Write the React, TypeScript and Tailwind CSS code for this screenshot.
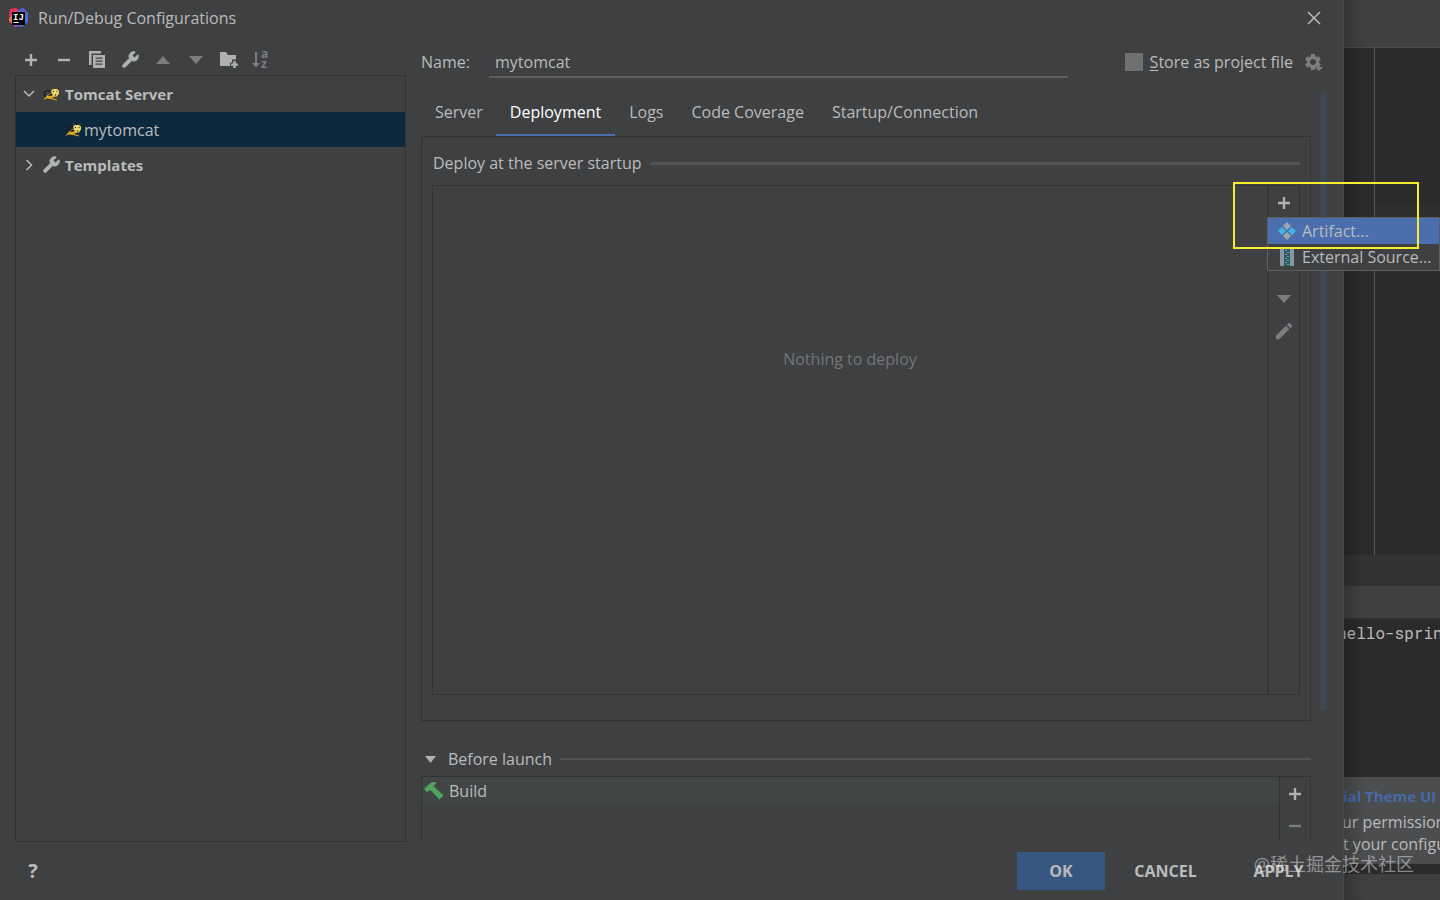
import { useState } from "react";
import type { ReactNode } from "react";
import { Wrench } from "lucide-react";
import { MdEdit, MdSettings } from "react-icons/md";

const TABS = [
  "Server",
  "Deployment",
  "Logs",
  "Code Coverage",
  "Startup/Connection",
];

const PlusIcon = () => (
  <svg width="14" height="14" viewBox="0 0 14 14" fill="currentColor">
    <path d="M5.800 1h2.400v4.800H13v2.400H8.200V13H5.800V8.200H1V5.800h4.800z" />
  </svg>
);

const MinusIcon = () => (
  <svg width="14" height="14" viewBox="0 0 14 14" fill="currentColor">
    <path d="M1 5.800h12v2.400H1z" />
  </svg>
);

const CopyIcon = () => (
  <svg width="16" height="18" viewBox="0 0 16 18">
    <path d="M0 0h12v2.500H2.500V14H0z" fill="currentColor" />
    <path
      fillRule="evenodd"
      fill="currentColor"
      d="M4 4h12v13H4zM6.500 6.500v1.200h7V6.500zM6.500 9.500v1.200h7V9.500zM6.500 12.500v1.200h7v-1.200z"
    />
  </svg>
);

const TriangleIcon = ({ up = false }: { up?: boolean }) => (
  <svg width="14" height="8" viewBox="0 0 14 8" fill="currentColor">
    <path d={up ? "M7 0l7 8H0z" : "M0 0h14L7 8z"} />
  </svg>
);

const WrenchIcon = () => (
  <Wrench size={19} strokeWidth={1} fill="currentColor" />
);

const FolderPlusIcon = () => (
  <svg width="19" height="17" viewBox="0 0 19 17" fill="currentColor">
    <path d="M0 1h6l2 3h8v4.500h-4v3h-2V15H0z" />
    <path d="M13.300 10h2.400v2.400H18v2.300h-2.300V17h-2.400v-2.300H11v-2.300h2.300z" />
  </svg>
);

const SortIcon = () => (
  <svg width="20" height="22" viewBox="0 0 20 22" fill="currentColor">
    <path d="M3 3h2v11h3l-4 4.500L0 14h3z" />
    <text x="9" y="9" fontSize="12" fontWeight="700" fontFamily="Open Sans">
      a
    </text>
    <text x="9" y="19" fontSize="12" fontWeight="700" fontFamily="Open Sans">
      z
    </text>
  </svg>
);

const ChevronIcon = ({ open = false }: { open?: boolean }) => (
  <svg
    width="12"
    height="12"
    viewBox="0 0 12 12"
    fill="none"
    stroke="currentColor"
    strokeWidth="1.500"
  >
    <path d={open ? "M1 3l5 5 5-5" : "M3.500 1l5 5-5 5"} />
  </svg>
);

const TomcatIcon = () => (
  <svg width="17" height="14" viewBox="0 0 17 14">
    <path
      d="M3 9.500C0 8 1 4 4.500 3.500L8 4.500"
      fill="none"
      stroke="#1d1d1b"
      strokeWidth="1.200"
    />
    <path d="M3.500 9l5-3.500 3.500 4-3 1.500 5 1.500v1L8 12l-4-.5L0 13l3-3z" fill="#dba91f" />
    <path d="M5 8.500l3.500-2.500 1.500 2-3 1z" fill="#1d1d1b" />
    <path d="M8 .5l2 1.500h4l2-1.500v6L14 9.500h-3L8.500 6z" fill="#eed56c" />
    <path d="M8 .5l2 1.500-1.500 1.500zM16 .5L14 2l2 1.500zM11.500 7.500h2l-1 1.500z" fill="#2b2410" />
    <path d="M10 4h1v1h-1zM13.500 4h1v1h-1z" fill="#1d1d1b" />
  </svg>
);

const HammerIcon = () => (
  <svg width="20" height="18" viewBox="0 0 20 18" fill="#4fa35c">
    <path d="M0 7l6-5.500C8 0 10.500-.5 12.500 1L9.500 4l10 9.500-4 4L6.500 8 3 10z" />
  </svg>
);

const ArtifactIcon = () => (
  <svg width="18" height="18" viewBox="0 0 18 18">
    <path d="M9 0l4 4-4 4-4-4zM9 10l4 4-4 4-4-4z" fill="#9aa7b0" />
    <path d="M4 5l4 4-4 4-4-4zM14 5l4 4-4 4-4-4z" fill="#40b6e0" />
  </svg>
);

const ArchiveIcon = () => (
  <svg width="14" height="17" viewBox="0 0 14 17">
    <path d="M0 0h14v17H0z" fill="#8b979f" />
    <path d="M4 0h6v17H4z" fill="#33565f" />
    <path
      d="M5 1h2v1H5zM7 3h2v1H7zM5 5h2v1H5zM7 7h2v1H7zM5 9h2v1H5zM7 11h2v1H7zM5 13h2v1H5zM7 15h2v1H7z"
      fill="#40b6c8"
    />
  </svg>
);

const IdeaLogo = () => (
  <svg width="21" height="20" viewBox="0 0 21 20">
    <path d="M2 1l6-1 4 3-5 9-6-4z" fill="#e8325c" />
    <path d="M1 10l5-4 3 9-5 1-3-3z" fill="#f0733c" />
    <path d="M10 2l5-2 5 5v9l-6 5-5-1z" fill="#3d6fe0" />
    <path d="M11 3l4-3 5 5-2 4z" fill="#5c5fc8" />
    <path d="M3 15l5-2 6 4-7 2z" fill="#b04ad0" />
    <path d="M4 4h13v13H4z" fill="#000" />
    <path d="M5.500 14h5v1h-5z" fill="#fff" />
    <text
      x="5"
      y="12"
      fontSize="9"
      fontWeight="700"
      fontFamily="Liberation Mono"
      fill="#fff"
    >
      IJ
    </text>
  </svg>
);

type IconButtonProps = {
  label: string;
  dim?: boolean;
  children: ReactNode;
};

const IconButton = ({ label, dim, children }: IconButtonProps) => (
  <button
    type="button"
    aria-label={label}
    className={`flex h-8 w-8 items-center justify-center ${dim ? "text-[#7b7d7f]" : "text-[#afb1b3]"}`}
  >
    {children}
  </button>
);

const ConfigTree = () => (
  <aside className="flex w-[391px] shrink-0 flex-col">
    <div className="flex h-[31px] items-center gap-px">
      <IconButton label="Add"><PlusIcon /></IconButton>
      <IconButton label="Remove"><MinusIcon /></IconButton>
      <IconButton label="Copy"><CopyIcon /></IconButton>
      <IconButton label="Edit templates"><WrenchIcon /></IconButton>
      <IconButton label="Move up" dim><TriangleIcon up /></IconButton>
      <IconButton label="Move down" dim><TriangleIcon /></IconButton>
      <IconButton label="New folder"><FolderPlusIcon /></IconButton>
      <IconButton label="Sort" dim><SortIcon /></IconButton>
    </div>
    <ul className="flex-1 border border-[#313335]">
      <li>
        <div className="flex h-9 items-center pl-[7px] text-[15px] font-bold">
          <ChevronIcon open />
          <span className="mr-1 ml-2"><TomcatIcon /></span>
          <span className="pl-px">Tomcat Server</span>
        </div>
        <div className="flex h-[35px] items-center gap-0.5 bg-[#0d293e] pl-[49px]">
          <TomcatIcon />
          mytomcat
        </div>
      </li>
      <li className="flex h-[35px] items-center pl-[7px] text-[15px] font-bold">
        <ChevronIcon />
        <span className="mr-1 ml-[7px] text-[#afb1b3]"><WrenchIcon /></span>
        Templates
      </li>
    </ul>
  </aside>
);

const AddMenu = () => (
  <div
    role="menu"
    className="absolute top-[31px] -left-0.5 z-10 w-[173px] border border-[#5e6060] bg-[#3e4042]"
  >
    <button
      type="button"
      role="menuitem"
      className="flex h-[26px] w-full items-center gap-1.5 bg-[#4b6eaf] pl-2.5 whitespace-nowrap"
    >
      <ArtifactIcon />
      Artifact...
    </button>
    <button
      type="button"
      role="menuitem"
      className="flex h-[26px] w-full items-center gap-2 pl-3 whitespace-nowrap"
    >
      <ArchiveIcon />
      External Source...
    </button>
  </div>
);

const DeploymentPanel = () => (
  <section className="flex flex-1 flex-col border border-[#313335] px-2.5 pt-[15px] pb-[25px]">
    <div className="flex items-center gap-2 pl-px">
      <h2>Deploy at the server startup</h2>
      <div className="h-[3px] flex-1 bg-[#515355]" />
    </div>
    <div className="mt-[11px] flex flex-1 border border-[#313335]">
      <div className="flex-1 pt-[162px] text-center text-[#747678]">
        Nothing to deploy
      </div>
      <div className="relative border-l-2 border-[#353739] pt-px">
        <div className="flex w-[30px] flex-col items-center">
          <IconButton label="Add deployment"><PlusIcon /></IconButton>
          <IconButton label="Remove deployment" dim><MinusIcon /></IconButton>
          <IconButton label="Move deployment up" dim><TriangleIcon up /></IconButton>
          <IconButton label="Move deployment down" dim><TriangleIcon /></IconButton>
          <IconButton label="Edit deployment" dim><MdEdit size={22} /></IconButton>
        </div>
        <AddMenu />
        <div className="pointer-events-none absolute -top-1 -left-9 z-20 h-[67px] w-[186px] border-2 border-[#f5ee2f]" />
      </div>
    </div>
  </section>
);

const BeforeLaunch = () => (
  <section className="mt-[27px]">
    <div className="flex h-[22px] items-center">
      <button type="button" className="flex items-center gap-3 pl-1">
        <svg width="11" height="7" viewBox="0 0 11 7" fill="#afb1b3">
          <path d="M0 0h11L5.500 7z" />
        </svg>
        Before launch
      </button>
      <div className="ml-2 h-0.5 flex-1 bg-[#515355]" />
    </div>
    <div className="mt-1.5 flex h-[66px] border border-b-0 border-[#313335]">
      <div className="flex-1">
        <div className="flex h-7 items-center gap-[5px] bg-[#3f4645] pl-0.5">
          <HammerIcon />
          Build
        </div>
      </div>
      <div className="flex w-[31px] flex-col items-center border-l border-[#313335] pt-px">
        <IconButton label="Add task"><PlusIcon /></IconButton>
        <IconButton label="Remove task" dim><MinusIcon /></IconButton>
      </div>
    </div>
  </section>
);

const ConfigEditor = () => {
  const [activeTab, setActiveTab] = useState("Deployment");
  const [name, setName] = useState("mytomcat");

  return (
    <main className="flex min-w-0 flex-1 flex-col">
      <div className="flex h-9 items-center pr-5">
        <label htmlFor="name" className="w-[68px]">Name:</label>
        <input
          id="name"
          value={name}
          onChange={(e) => setName(e.target.value)}
          className="h-8 min-w-0 flex-1 border-b-2 border-[#5b5d5f] px-1.5 pt-0.5 outline-none"
        />
        <input
          id="store"
          type="checkbox"
          className="ml-[57px] size-[18px] appearance-none bg-[#6e7072]"
        />
        <label htmlFor="store" className="ml-[7px]">
          <span className="underline underline-offset-2">S</span>tore as project file
        </label>
        <button
          type="button"
          aria-label="Storage options"
          className="relative ml-2.5 text-[#7b7d7f]"
        >
          <MdSettings size={20} />
          <svg
            className="absolute right-0 bottom-0"
            width="8"
            height="5"
            viewBox="0 0 8 5"
            fill="currentColor"
          >
            <path d="M0 0h8L4 4z" />
          </svg>
        </button>
      </div>
      <div className="flex flex-1 pt-2.5 pr-4">
        <div className="flex min-w-0 flex-1 flex-col">
          <div role="tablist" className="flex">
            {TABS.map((tab) => (
              <button
                key={tab}
                type="button"
                role="tab"
                aria-selected={tab === activeTab}
                onClick={() => setActiveTab(tab)}
                className={`h-[46px] border-b-2 px-3.5 first:pr-[13px] ${
                  tab === activeTab
                    ? "border-[#4b6eaf] text-white"
                    : "border-transparent"
                }`}
              >
                {tab}
              </button>
            ))}
          </div>
          <DeploymentPanel />
          <BeforeLaunch />
        </div>
        <div className="mt-0.5 mb-[131px] ml-[9px] w-[7px] rounded-full bg-[#3d4852]" />
      </div>
    </main>
  );
};

const RunConfigDialog = () => (
  <div className="relative z-10 flex min-w-0 flex-1 flex-col border-r border-[#484a4c] bg-[#3e4042]">
    <header className="flex h-11 items-start justify-between pt-[7px] pr-[22px] pl-2">
      <h1 className="flex items-center gap-[9px]">
        <IdeaLogo />
        Run/Debug Configurations
      </h1>
      <button type="button" aria-label="Close" className="pt-1">
        <svg
          width="14"
          height="14"
          viewBox="0 0 14 14"
          stroke="currentColor"
          strokeWidth="1.500"
        >
          <path d="M1 1l12 12M13 1L1 13" />
        </svg>
      </button>
    </header>
    <div className="flex flex-1 gap-[15px] pl-[15px]">
      <ConfigTree />
      <ConfigEditor />
    </div>
    <footer className="flex h-[58px] items-center justify-between pr-3 pl-6 font-bold">
      <button type="button" aria-label="Help" className="w-[18px] text-xl">
        ?
      </button>
      <div className="flex">
        <button type="button" className="h-[38px] w-[88px] bg-[#365880]">
          OK
        </button>
        <button type="button" className="h-[38px] w-[121px]">
          CANCEL
        </button>
        <button type="button" className="h-[38px] w-[105px]">
          APPLY
        </button>
      </div>
    </footer>
  </div>
);

const IdeBackdrop = () => (
  <div className="relative flex w-24 shrink-0 flex-col overflow-hidden bg-[#2b2b2b] whitespace-nowrap">
    <div className="h-12 border-b border-[#4a4c4e] bg-[#3e4042]" />
    <div className="flex flex-1">
      <div className="w-[31px] border-r border-[#555759]" />
      <div className="flex-1 pt-[157px]">
        <div className="h-[30px] bg-[#2f2f2f]" />
      </div>
    </div>
    <div className="h-[31px] bg-[#313335]" />
    <div className="h-[33px] border-b border-[#313335] bg-[#3e4042]" />
    <div className="-ml-[7px] h-[158px] pt-[3px] font-['Roboto_Mono','Liberation_Mono',monospace]">
      hello-spring
    </div>
    <div className="flex h-[87px] flex-col bg-[#4b4d4f] pt-2 leading-[22px]">
      <a href="#theme" className="-ml-px pb-1 text-[15px] font-bold text-[#476ba8]">
        ial Theme UI
      </a>
      <p className="-ml-0.5">ur permission</p>
      <p className="-ml-px">t your configu</p>
    </div>
    <div className="h-2.5" />
    <div className="h-[26px] bg-[#3e4042]" />
    <div className="absolute inset-y-0 left-0 w-5 bg-linear-to-r from-black/20 to-transparent" />
  </div>
);

export default function App() {
  return (
    <div className="relative flex min-h-screen overflow-hidden bg-[#2b2b2b] font-['Open_Sans','Noto_Sans_CJK_SC',sans-serif] text-base leading-[22px] text-[#bbbbbb]">
      <RunConfigDialog />
      <IdeBackdrop />
      <div className="pointer-events-none absolute right-[26px] bottom-6 z-20 text-lg leading-6 text-white/45">
        @稀土掘金技术社区
      </div>
    </div>
  );
}
